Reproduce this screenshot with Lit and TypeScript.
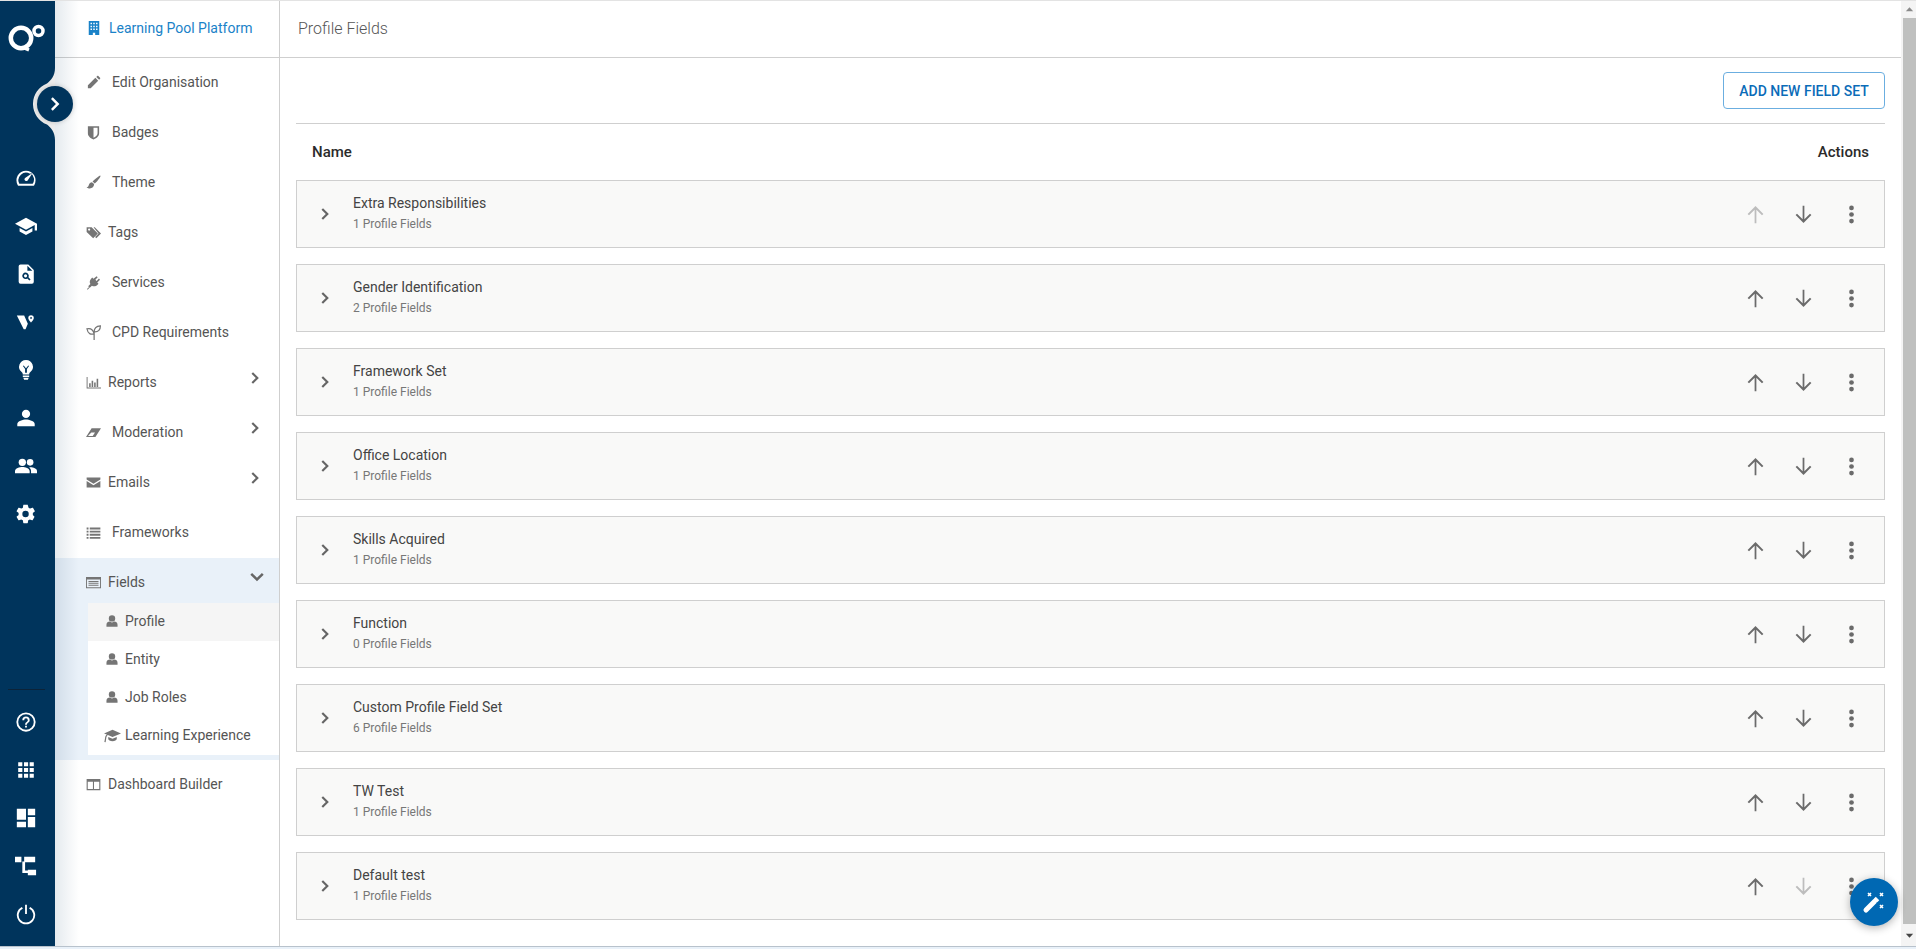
import { LitElement, html, css, svg } from 'lit';
import { customElement } from 'lit/decorators.js';

const ico = (body: unknown, size = 16, vb = '0 0 24 24') =>
  html`<svg width=${size} height=${size} viewBox=${vb} fill="currentColor">${body}</svg>`;

const chevron = svg`<path d="M6 4.600 8.600 2 18.600 12l-10 10L6 19.400 13.400 12z"/>`;
const person = svg`<circle cx="12" cy="7.500" r="5.500"/><path d="M2.500 22v-3.500c0-3.600 3-5.500 5.500-5.500 1 .9 2.400 1.400 4 1.400s3-.5 4-1.400c2.500 0 5.500 1.900 5.500 5.500V22z"/>`;

const railTop = [
  svg`<path fill-rule="evenodd" d="M12 4a10.500 10.500 0 0 0-9 15.800c.3.500.8.700 1.300.700h15.400c.5 0 1-.2 1.300-.7A10.500 10.500 0 0 0 12 4zm7.300 14.300H4.700A8.300 8.300 0 0 1 16.400 7.400l1-.6a8.500 8.500 0 0 1 1.900 11.500zM11 14.700a2 2 0 0 0 2.800 0l5.600-8.400-8.400 5.600a2 2 0 0 0 0 2.800z"/>`,
  svg`<path d="M12 3 0 9.500 12 16l9.500-5.200V17H24V9.500zM5 14.200V18l7 3.800 7-3.800v-3.800l-7 3.800z"/>`,
  svg`<path fill-rule="evenodd" d="M6 1.500h8.500L20.500 7.500v13a2 2 0 0 1-2 2H6a2 2 0 0 1-2-2v-17a2 2 0 0 1 2-2zM13.500 3v5.500H19zM11.500 10.500a3.500 3.500 0 1 0 1.900 6.400l2.300 2.300 1.300-1.300-2.300-2.300a3.500 3.500 0 0 0-3.200-5.100zm0 1.800a1.700 1.700 0 1 1 0 3.400 1.700 1.700 0 0 1 0-3.400z"/>`,
  svg`<path d="M2 5h8l4 9-2.500 6h-2zM17.500 4.500a3 3 0 0 1 3 3c0 1.800-3 5-3 5s-3-3.200-3-5a3 3 0 0 1 3-3z"/><circle cx="17.500" cy="7.500" r="1" fill="#00345c"/>`,
  svg`<path fill-rule="evenodd" d="M12 1a7.500 7.500 0 0 0-4.500 13.500c.8.700 1 1.500 1 2.500h7c0-1 .2-1.800 1-2.500A7.500 7.500 0 0 0 12 1zm-2.500 6 2.500 3 2.500-3 .8.600L13 11v4h-2v-4L8.700 7.600z"/><path d="M8.500 18h7v1.500h-7zM9 20.500h6l-1 2h-4z"/>`,
  svg`<circle cx="12" cy="7.500" r="4.500"/><path d="M2.500 21v-2.500c0-3.300 6.300-5 9.500-5s9.500 1.700 9.500 5V21z"/>`,
  svg`<circle cx="8" cy="8" r="4"/><circle cx="16.500" cy="8" r="3.600"/><path d="M0 20v-2.500C0 14.400 5 13 8 13s8 1.400 8 4.500V20zM17.500 20v-2.500c0-1.700-.8-3-2-4 .5-.1 1-.1 1.500-.1 2.800 0 7 1.300 7 4.100V20z"/>`,
  svg`<path fill-rule="evenodd" d="M19.400 13c.1-.3.100-.7.100-1s0-.7-.1-1l2.100-1.600c.2-.2.200-.4.100-.6l-2-3.500c-.1-.2-.4-.3-.6-.2l-2.500 1a7 7 0 0 0-1.700-1L14 2.400c0-.2-.2-.4-.5-.4h-4c-.2 0-.4.200-.5.400l-.4 2.700a7 7 0 0 0-1.700 1l-2.500-1c-.2-.1-.5 0-.6.200l-2 3.500c-.1.200-.1.400.1.600L4 11c-.1.300-.1.700-.1 1s0 .7.100 1l-2.100 1.600c-.2.200-.2.400-.1.600l2 3.500c.1.200.4.300.6.200l2.500-1c.5.400 1.100.7 1.700 1l.4 2.700c0 .2.200.4.500.4h4c.2 0 .4-.2.500-.4l.4-2.700a7 7 0 0 0 1.700-1l2.500 1c.2.100.5 0 .6-.2l2-3.500c.1-.2.100-.4-.1-.6zM11.500 15.500a3.500 3.500 0 1 1 0-7 3.500 3.500 0 0 1 0 7z"/>`,
];

const railBottom = [
  svg`<path fill-rule="evenodd" d="M12 1.500a10.500 10.500 0 1 0 0 21 10.500 10.500 0 0 0 0-21zm0 19a8.500 8.500 0 1 1 0-17 8.500 8.500 0 0 1 0 17zM11 16h2v2h-2zM12 6a4 4 0 0 0-4 4h2a2 2 0 1 1 4 0c0 2-3 1.800-3 5h2c0-2.300 3-2.500 3-5a4 4 0 0 0-4-4z"/>`,
  svg`<path d="M3.500 3.500h4.500v4.500H3.500zM9.800 3.500h4.500v4.500H9.800zM16 3.500h4.500v4.500H16zM3.500 9.800h4.500v4.500H3.500zM9.800 9.800h4.500v4.500H9.800zM16 9.800h4.500v4.500H16zM3.500 16h4.500v4.500H3.500zM9.800 16h4.500v4.500H9.800zM16 16h4.500v4.500H16z"/>`,
  svg`<path d="M2 2h10v12H2zM2 16h10v6H2zM14 2h8v7h-8zM14 11h8v11h-8z"/>`,
  svg`<path d="M0 2h7v6H0zM10 2h12v6H10zM14 16h9v6h-9zM8 7h3v10h3v2.500H8z"/>`,
  svg`<path d="M11 2h2v10h-2zM16.600 4.400l-1.200 1.700a8 8 0 1 1-6.800 0L7.400 4.400a10 10 0 1 0 9.200 0z"/>`,
];

const menuIcons: Record<string, unknown> = {
  pencil: svg`<path d="M3 16.500 15 4.500l4.500 4.500-12 12H3zM16.500 3l1.500-1.500c.5-.5 1.200-.5 1.700 0l2.800 2.800c.5.500.5 1.200 0 1.700L21 7.500z"/>`,
  shield: svg`<path fill-rule="evenodd" d="M3 2h18v11c0 5-5 8.500-9 10-4-1.500-9-5-9-10zm9 2.500v15.700c3-1.400 6.500-4 6.500-7.200V4.500z"/>`,
  brush: svg`<path d="M23 1c.6.600-.4 2.500-1.500 4-1.800 2.500-5.500 7-7.500 8.500l-3.500-3C12 8.500 16.500 5 19 3.300 20.500 2.200 22.400.4 23 1zM9.500 11.500l3.500 3c0 4-3 7-7 7-2 0-4.500-1-5-2 2.500 0 3-1.500 3.500-3.500.5-2.500 3-4.500 5-4.500z"/>`,
  tags: svg`<path fill-rule="evenodd" d="M1 3.500h8L19 13.500l-7.500 7.500L1 11zm4 2a1.800 1.800 0 1 0 0 3.600 1.800 1.800 0 0 0 0-3.600z"/><path d="M12 3.500h2L24 13.500 16.500 21l-2-2 5.500-5.500z"/>`,
  plug: svg`<path d="M17 2l1.700 1.700-3.700 3.700 2 2 3.700-3.700L22.400 7.400 18 12l2 2-1.500 1.500c-3 3-6.500 3-9 1.500L6 20.500 3.500 18 7 14.500c-1.500-2.500-1.500-6 1.500-9L10 4l2 2z"/><path d="M1.500 22.500 5 19l1 1-3.500 3.500z"/>`,
  sprout: svg`<g fill="none" stroke="currentColor" stroke-width="2"><path d="M13 24V11M13 14c-5 2-10 0-11.500-8 5-1 10 1 11.500 8zM13 11c0-6 4-9 10-9.500 0 6-3 10-10 9.500z"/></g>`,
  chart: svg`<path d="M1 3h1.500v17H24v1.500H1zM5 13h2.500v6H5zM9 9h2.500v10H9zM13 12h2.500v7H13zM17 6h2.500v13H17z"/>`,
  eraser: svg`<path fill-rule="evenodd" d="M9 5h15L15 19H0zm-.5 7L3.200 17.500h7.500l3.700-5.500z"/>`,
  mail: svg`<path d="M1 4h22v3l-11 7L1 7zM1 9.500l11 7 11-7V20H1z"/>`,
  list: svg`<path d="M1 4h3v3H1zM6 4h17v3H6zM1 9h3v3H1zM6 9h17v3H6zM1 14h3v3H1zM6 14h17v3H6zM1 19h3v3H1zM6 19h17v3H6z"/>`,
  card: svg`<path fill-rule="evenodd" d="M0 3h24v18H0zm1.500 4v12.500h21V7zM4 9.500h16V11H4zM4 12.500h16V14H4zM4 15.500h16V17H4z"/>`,
  person,
  cap: svg`<path d="M12 4 0 9l4 1.700c-1.500 1-2.500 3-2.600 5.500l-.9 5 1.800.3.8-5.300c.1-2.300 1-4.100 2.400-5L12 14l12-5zM6 14v3c0 1.500 3 3 6 3s6-1.500 6-3v-3l-6 2.500z"/>`,
  columns: svg`<path fill-rule="evenodd" d="M1 3h22v18H1zm1.800 4.500v11.700h8.300V7.500zm10 0v11.700h8.400V7.500z"/>`,
  building: svg`<path fill-rule="evenodd" d="M3 0h18v24h-7v-4h-4v4H3zm3 3v2.500h2.500V3zm4.700 0v2.500h2.600V3zm4.800 0v2.500H18V3zM6 8v2.500h2.500V8zm4.700 0v2.500h2.600V8zm4.800 0v2.500H18V8zM6 13v2.500h2.500V13zm4.700 0v2.500h2.600V13zm4.800 0v2.500H18V13z"/>`,
};

type MenuItem = { label: string; icon: string; wide?: boolean; caret?: 'right' | 'down' };

const menu: MenuItem[] = [
  { label: 'Edit Organisation', icon: 'pencil', wide: true },
  { label: 'Badges', icon: 'shield', wide: true },
  { label: 'Theme', icon: 'brush', wide: true },
  { label: 'Tags', icon: 'tags' },
  { label: 'Services', icon: 'plug', wide: true },
  { label: 'CPD Requirements', icon: 'sprout', wide: true },
  { label: 'Reports', icon: 'chart', caret: 'right' },
  { label: 'Moderation', icon: 'eraser', wide: true, caret: 'right' },
  { label: 'Emails', icon: 'mail', caret: 'right' },
  { label: 'Frameworks', icon: 'list', wide: true },
];

const fieldSubs = [
  { label: 'Profile', icon: 'person', active: true },
  { label: 'Entity', icon: 'person' },
  { label: 'Job Roles', icon: 'person' },
  { label: 'Learning Experience', icon: 'cap' },
];

const fieldSets = [
  { name: 'Extra Responsibilities', count: 1 },
  { name: 'Gender Identification', count: 2 },
  { name: 'Framework Set', count: 1 },
  { name: 'Office Location', count: 1 },
  { name: 'Skills Acquired', count: 1 },
  { name: 'Function', count: 0 },
  { name: 'Custom Profile Field Set', count: 6 },
  { name: 'TW Test', count: 1 },
  { name: 'Default test', count: 1 },
];

const arrowUp = svg`<path d="M11 22V6.500L4.600 12.900 3 11.300 12 2.300l9 9-1.600 1.600L13 6.500V22z"/>`;
const arrowDown = svg`<path d="M11 2v15.500l-6.400-6.400L3 12.700l9 9 9-9-1.600-1.600L13 17.500V2z"/>`;

@customElement('app-root')
export class AppRoot extends LitElement {
  static styles = css`
    :host {
      display: block;
      height: 949px;
      overflow: hidden;
      background: #e9f1f9;
      font-family: Roboto, 'Liberation Sans', sans-serif;
      color: #555;
    }
    .page {
      height: 947px;
      box-sizing: border-box;
      border-top: 1px solid #e3e3e3;
      border-bottom: 1px solid #b8c2cc;
      display: flex;
      background: #fff;
      position: relative;
    }
    .rail {
      width: 55px;
      flex: none;
      box-sizing: border-box;
      padding-right: 3px;
      background: #00345c;
      color: #fff;
      display: flex;
      flex-direction: column;
      align-items: center;
      position: relative;
      z-index: 2;
    }
    .logo {
      height: 153px;
      width: 100%;
      display: flex;
      justify-content: center;
      padding-top: 22px;
      box-sizing: border-box;
    }
    .rail-btn {
      height: 48px;
      width: 100%;
      display: flex;
      align-items: center;
      justify-content: center;
      flex: none;
    }
    .spacer { flex: 1; }
    .rail-sep {
      width: 37px;
      height: 1px;
      background: #0c2338;
      margin-bottom: 8px;
    }
    .rail-bottom { width: 100%; padding-bottom: 8px; }
    .notch {
      position: absolute;
      left: 33px;
      top: 67px;
      z-index: 3;
    }
    .toggle {
      position: absolute;
      left: 37px;
      top: 85px;
      width: 36px;
      height: 36px;
      border-radius: 50%;
      background: #00345c;
      color: #fff;
      display: flex;
      align-items: center;
      justify-content: center;
      box-shadow: 0 0 5px rgba(0, 0, 0, 0.2);
      z-index: 4;
    }
    .sidenav {
      width: 225px;
      flex: none;
      box-sizing: border-box;
      border-right: 1px solid #cfcfcf;
      font-size: 14px;
      position: relative;
    }
    .sidenav::before {
      content: '';
      position: absolute;
      left: 0;
      top: 0;
      bottom: 0;
      width: 24px;
      background: linear-gradient(90deg, rgba(0, 52, 92, 0.1), rgba(0, 52, 92, 0));
      z-index: 1;
      pointer-events: none;
    }
    .org {
      height: 57px;
      box-sizing: border-box;
      border-bottom: 1px solid #cfcfcf;
      display: flex;
      align-items: center;
      gap: 8px;
      padding: 0 0 2px 32px;
      color: #1a82c8;
    }
    .item {
      height: 50px;
      box-sizing: border-box;
      padding: 0 0 2px 31px;
      display: flex;
      align-items: center;
      position: relative;
      color: #555;
    }
    .item svg.main { color: #757575; flex: none; }
    .item .label { margin-left: 7px; }
    .item.wide .label { margin-left: 11px; }
    .caret {
      position: absolute;
      right: 17px;
      top: 13px;
      color: #666;
      display: flex;
    }
    .caret.down { right: 14px; top: 12px; }
    .fields { background: #e9f1f9; padding-bottom: 5px; }
    .subs { margin: -5px 0 0 33px; background: #fff; position: relative; }
    .sub {
      height: 38px;
      box-sizing: border-box;
      padding: 0 0 2px 15px;
      display: flex;
      align-items: center;
      gap: 4px;
      color: #555;
    }
    .sub.active { background: #f5f5f5; }
    .sub svg { color: #757575; flex: none; }
    .sub .ic { width: 18px; display: flex; justify-content: center; }
    .main {
      flex: 1;
      min-width: 0;
      display: flex;
      flex-direction: column;
    }
    .title {
      height: 57px;
      box-sizing: border-box;
      flex: none;
      border-bottom: 1px solid #cfcfcf;
      display: flex;
      align-items: center;
      padding: 0 0 2px 18px;
      font-size: 16px;
      font-weight: 300;
      color: #555;
    }
    .body { padding: 14px 16px 0 16px; }
    .tools {
      display: flex;
      justify-content: flex-end;
      padding-bottom: 14px;
      border-bottom: 1px solid #cfcfcf;
    }
    .add {
      width: 162px;
      height: 37px;
      box-sizing: border-box;
      border: 1px solid #6baee0;
      border-radius: 4px;
      background: #fff;
      color: #0b6cb8;
      font: 500 14px Roboto, sans-serif;
      padding: 0;
    }
    .head {
      height: 56px;
      display: flex;
      align-items: center;
      justify-content: space-between;
      padding: 0 16px;
      font-size: 15px;
      font-weight: 500;
      color: #2b2b2b;
    }
    .row {
      height: 68px;
      box-sizing: border-box;
      margin-bottom: 16px;
      border: 1px solid #cfcfcf;
      background: #f9f9f8;
      display: flex;
      align-items: center;
      padding-left: 21px;
    }
    .row .exp { color: #666; display: flex; }
    .info { margin-left: 21px; flex: 1; }
    .name { font-size: 14px; color: #444; line-height: 18px; margin-top: -3px; }
    .count { font-size: 12px; color: #777; line-height: 16px; margin-top: 4px; }
    .acts { display: flex; padding-right: 9px; }
    .act {
      width: 48px;
      display: flex;
      justify-content: center;
      color: #6b6b6b;
    }
    .act.off { color: #bdbdbd; }
    .scroll {
      width: 15px;
      flex: none;
      background: #f4f4f4;
      display: flex;
      flex-direction: column;
      align-items: center;
    }
    .scroll .end {
      height: 17px;
      flex: none;
      width: 100%;
      padding-left: 2px;
      box-sizing: border-box;
      display: flex;
      align-items: center;
      justify-content: center;
      color: #8a8a8a;
    }
    .scroll .end.bottom { height: 22px; color: #444; }
    .thumb {
      flex: 1;
      width: 13px;
      margin-left: 2px;
      background: #bfc0bf;
    }
    .fab {
      position: absolute;
      left: 1850px;
      top: 877px;
      width: 48px;
      height: 48px;
      border-radius: 50%;
      background: #0068b3;
      color: #fff;
      box-shadow: 0 2px 8px rgba(0, 0, 0, 0.3);
      z-index: 3;
      display: flex;
    }
  `;

  private renderItem(m: MenuItem) {
    return html`<div class="item ${m.wide ? 'wide' : ''}">
      <svg class="main" width="15" height="15" viewBox="0 0 24 24" fill="currentColor">${menuIcons[m.icon]}</svg>
      <span class="label">${m.label}</span>
      ${m.caret === 'right' ? html`<span class="caret">${ico(chevron, 14)}</span>` : ''}
      ${m.caret === 'down'
        ? html`<span class="caret down">${ico(svg`<path d="M2 7 4.600 4.400 12 11.800l7.400-7.400L22 7 12 17z"/>`, 16)}</span>`
        : ''}
    </div>`;
  }

  render() {
    return html`
      <div class="page">
        <nav class="rail">
          <div class="logo">
            <svg width="37" height="30" viewBox="0 0 37 30" fill="none" stroke="#fff">
              <circle cx="13" cy="15" r="10.200" stroke-width="4.500" />
              <path d="M15 24.500 21 27" stroke-width="3.500" />
              <circle cx="30.500" cy="8" r="4.500" stroke-width="3.500" />
            </svg>
          </div>
          ${railTop.map((b) => html`<div class="rail-btn">${ico(b, 22)}</div>`)}
          <div class="spacer"></div>
          <div class="rail-sep"></div>
          <div class="rail-bottom">
            ${railBottom.map((b) => html`<div class="rail-btn">${ico(b, 22)}</div>`)}
          </div>
        </nav>
        <svg class="notch" width="22" height="72" viewBox="0 0 22 72">
          <path d="M22 0C22 8 18 12 14 15.500A22 22 0 0 0 14 56.500C18 60 22 64 22 72z" fill="#ececec" />
        </svg>
        <div class="toggle">${ico(chevron, 16)}</div>

        <aside class="sidenav">
          <div class="org">${ico(menuIcons.building, 14)}<span>Learning Pool Platform</span></div>
          ${menu.map((m) => this.renderItem(m))}
          <div class="fields">
            ${this.renderItem({ label: 'Fields', icon: 'card', caret: 'down' })}
            <div class="subs">
              ${fieldSubs.map(
                (s) => html`<div class="sub ${s.active ? 'active' : ''}">
                  <span class="ic">${ico(menuIcons[s.icon], s.icon === 'cap' ? 17 : 14)}</span>
                  <span>${s.label}</span>
                </div>`,
              )}
            </div>
          </div>
          ${this.renderItem({ label: 'Dashboard Builder', icon: 'columns' })}
        </aside>

        <main class="main">
          <div class="title">Profile Fields</div>
          <div class="body">
            <div class="tools"><button class="add">ADD NEW FIELD SET</button></div>
            <div class="head"><span>Name</span><span>Actions</span></div>
            ${fieldSets.map(
              (f, i) => html`<div class="row">
                <span class="exp">${ico(chevron, 14)}</span>
                <div class="info">
                  <div class="name">${f.name}</div>
                  <div class="count">${f.count} Profile Fields</div>
                </div>
                <div class="acts">
                  <span class="act ${i === 0 ? 'off' : ''}">${ico(arrowUp, 21)}</span>
                  <span class="act ${i === fieldSets.length - 1 ? 'off' : ''}">${ico(arrowDown, 21)}</span>
                  <span class="act">${ico(svg`<circle cx="12" cy="4.500" r="2.700"/><circle cx="12" cy="12" r="2.700"/><circle cx="12" cy="19.500" r="2.700"/>`, 21)}</span>
                </div>
              </div>`,
            )}
          </div>
        </main>

        <div class="scroll">
          <div class="end">${ico(svg`<path d="M12 7l8 9H4z"/>`, 11)}</div>
          <div class="thumb"></div>
          <div class="end bottom">${ico(svg`<path d="M12 17l8-9H4z"/>`, 11)}</div>
        </div>

        <div class="fab">
          <svg width="48" height="48" viewBox="0 0 48 48" fill="none" stroke="#fff">
            <path d="M16 32 24.500 23.500" stroke-width="5" stroke-linecap="round" />
            <path d="M25.500 22.500 27.500 20.500" stroke-width="5" />
            <path d="M18 15l3 3M21 15l-3 3M30 15l3 3M33 15l-3 3M30 27l3 3M33 27l-3 3" stroke-width="1.600" />
          </svg>
        </div>
      </div>
    `;
  }
}
